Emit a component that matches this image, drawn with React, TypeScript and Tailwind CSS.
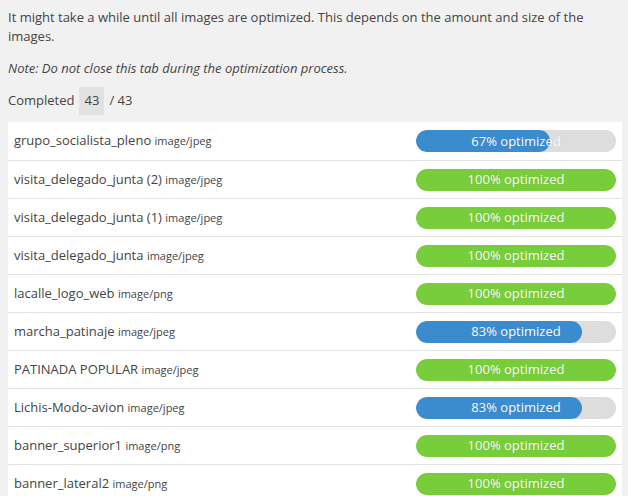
import React from "react";

const rows: { name: string; type: string; pct: number }[] = [
  { name: "grupo_socialista_pleno", type: "image/jpeg", pct: 67 },
  { name: "visita_delegado_junta (2)", type: "image/jpeg", pct: 100 },
  { name: "visita_delegado_junta (1)", type: "image/jpeg", pct: 100 },
  { name: "visita_delegado_junta", type: "image/jpeg", pct: 100 },
  { name: "lacalle_logo_web", type: "image/png", pct: 100 },
  { name: "marcha_patinaje", type: "image/jpeg", pct: 83 },
  { name: "PATINADA POPULAR", type: "image/jpeg", pct: 100 },
  { name: "Lichis-Modo-avion", type: "image/jpeg", pct: 83 },
  { name: "banner_superior1", type: "image/png", pct: 100 },
  { name: "banner_lateral2", type: "image/png", pct: 100 },
];

function Bar({ pct }: { pct: number }) {
  const done = pct >= 100;
  return (
    <div className="relative w-[200px] h-[22px] rounded-full bg-[#dddddd] overflow-hidden">
      <div
        className={`h-full rounded-full ${done ? "bg-[#77cd3a]" : "bg-[#3a8ccf]"}`}
        style={{ width: `${pct}%` }}
      />
      <div className="absolute inset-0 flex items-center justify-center text-white text-[13px] leading-none [text-shadow:0_0_1px_rgba(0,0,0,0.15)]">
        {pct}% optimized
      </div>
    </div>
  );
}

export default function App() {
  return (
    <div className="min-h-[496px] bg-[#f1f1f1] text-[#444] px-2 pt-[7px] font-['Open_Sans',sans-serif] text-[13px]">
      <p className="leading-[19px] pt-[1px]">
        It might take a while until all images are optimized. This depends on the amount and size of the images.
      </p>
      <p className="italic mt-[13px] leading-[19px]">Note: Do not close this tab during the optimization process.</p>
      <div className="flex items-center mt-[9px] h-[28px]">
        <span>Completed</span>
        <span className="ml-[5px] bg-[#e2e2e2] h-[28px] w-[25px] flex items-center justify-center">43</span>
        <span className="ml-[5px]">/ 43</span>
      </div>
      <div className="mt-[7px] bg-white w-[614px]">
        {rows.map((r, i) => (
          <div
            key={i}
            className={`flex items-center justify-between h-[38px] pl-[6px] pr-[6px] ${i > 0 ? "border-t border-[#e1e1e1]" : ""}`}
          >
            <div className="whitespace-nowrap">
              {r.name} <span className="text-[11px]">{r.type}</span>
            </div>
            <Bar pct={r.pct} />
          </div>
        ))}
      </div>
    </div>
  );
}
